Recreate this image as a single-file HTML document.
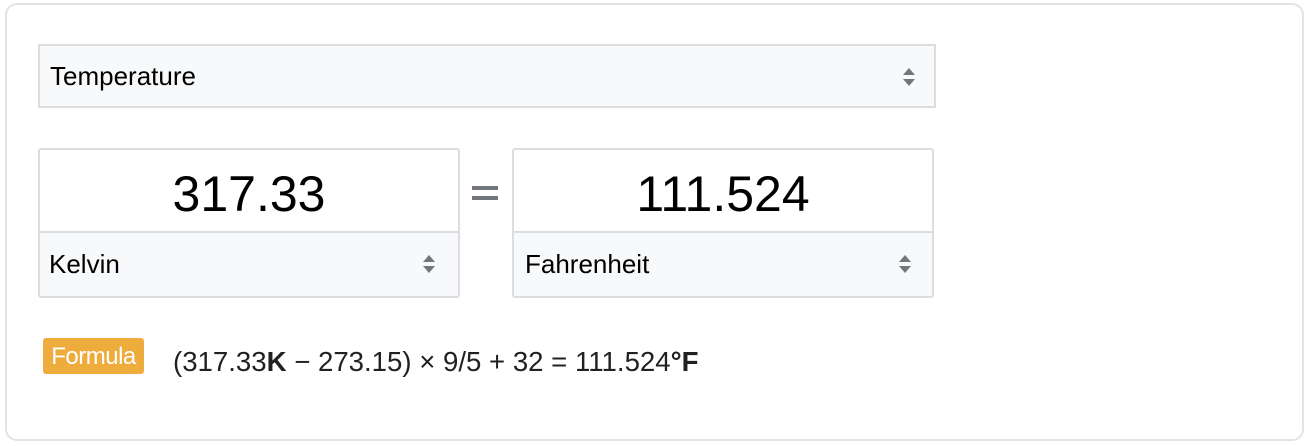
<!DOCTYPE html>
<html><head><style>
body{margin:0;width:1312px;height:446px;background:#fff;font-family:"Liberation Sans",Arial,sans-serif;color:#202122;position:relative;overflow:hidden}
.card{position:absolute;left:5px;top:3px;width:1299px;height:438px;border:2px solid #e2e3e6;border-radius:12px;box-sizing:border-box}
.sel{position:absolute;background:#f8f9fa;border:2px solid #dcdde0;box-sizing:border-box;font-size:26px;color:#000}
.arr{position:absolute;width:14px;height:24px}
.box{position:absolute;border:2px solid #dcdde0;border-radius:3px;box-sizing:border-box;background:#fff}
.num{position:absolute;left:0;right:0;top:0;height:84px;text-align:center;font-size:50px;line-height:88px;color:#000}
.unit{position:absolute;left:0;right:0;bottom:0;height:63px;border-top:2px solid #dcdde0;background:#f8f9fa;font-size:26px;color:#000}
</style></head><body>
<div class="card"></div>
<div class="sel" style="left:38px;top:44px;width:898px;height:64px">
<span style="position:absolute;left:10px;top:15px">Temperature</span>
<svg class="arr" style="left:862px;top:19px" viewBox="0 0 14 24"><path d="M1 10L7 3L13 10Z M1 14L7 21L13 14Z" fill="#72777d"/></svg>
</div>
<div class="box" style="left:38px;top:148px;width:422px;height:150px">
<div class="num">317.33</div>
<div class="unit"><span style="position:absolute;left:9px;top:16px">Kelvin</span>
<svg class="arr" style="left:382px;top:19px" viewBox="0 0 14 24"><path d="M1 10L7 3L13 10Z M1 14L7 21L13 14Z" fill="#72777d"/></svg></div>
</div>
<div style="position:absolute;left:472px;top:186px;width:26px;height:4px;background:#72777d"></div>
<div style="position:absolute;left:472px;top:196px;width:26px;height:4px;background:#72777d"></div>
<div class="box" style="left:512px;top:148px;width:422px;height:150px">
<div class="num">111.524</div>
<div class="unit"><span style="position:absolute;left:11px;top:16px">Fahrenheit</span>
<svg class="arr" style="left:384px;top:19px" viewBox="0 0 14 24"><path d="M1 10L7 3L13 10Z M1 14L7 21L13 14Z" fill="#72777d"/></svg></div>
</div>
<div style="position:absolute;left:43px;top:338px;width:101px;height:36px;background:#eeac3c;border-radius:3px;color:#fff;font-size:24px;line-height:38px;text-align:center;letter-spacing:-0.5px">Formula</div>
<div style="position:absolute;left:173px;top:346px;font-size:27.6px;line-height:32px;white-space:nowrap">(317.33<b>K</b> − 273.15) × 9/5 + 32 = 111.524<b>°F</b></div>
</body></html>
